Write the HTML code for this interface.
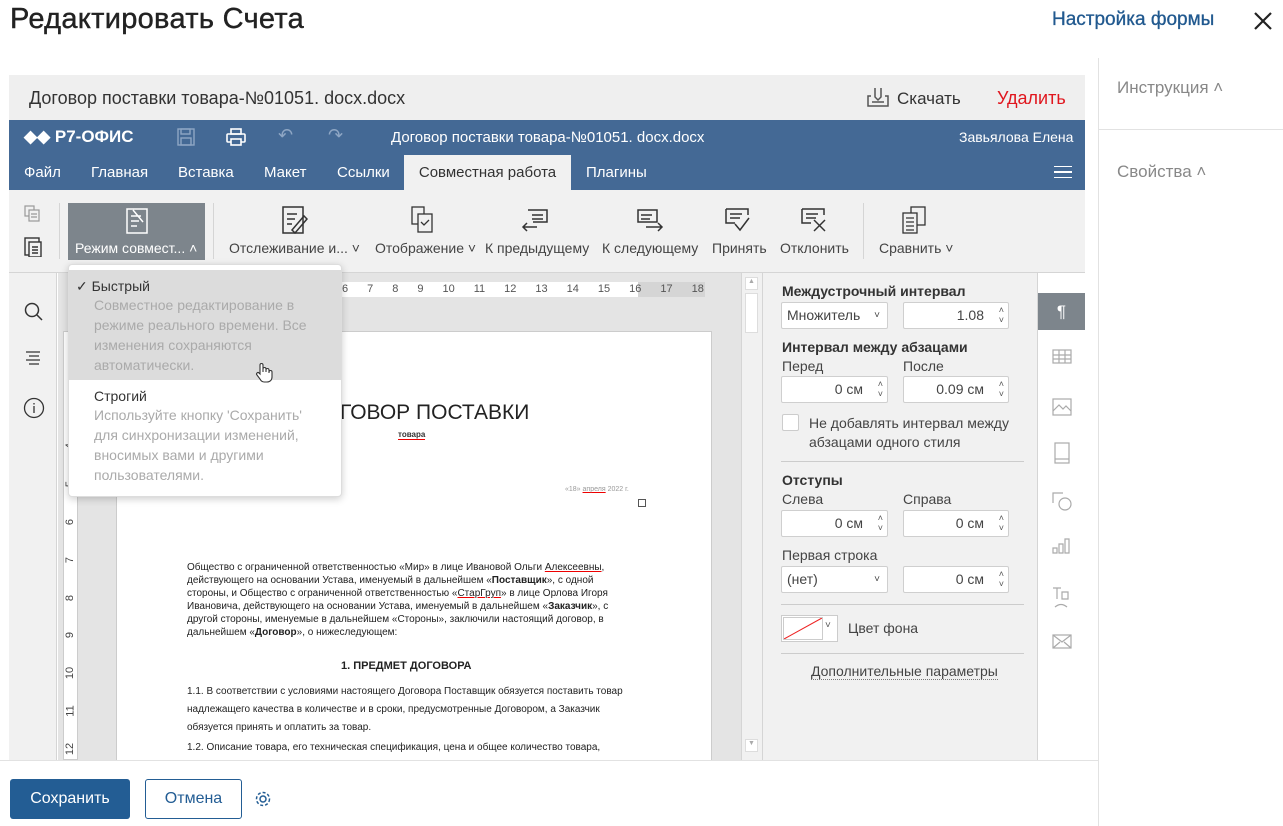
<!DOCTYPE html>
<html><head><meta charset="utf-8"><style>
*{box-sizing:border-box;margin:0;padding:0}
body{width:1283px;height:826px;overflow:hidden;background:#fff;font-family:"Liberation Sans",Arial,sans-serif;color:#333;position:relative}
.a{position:absolute;white-space:nowrap}
.tab{position:absolute;top:155px;height:35px;line-height:35px;color:#fff;font-size:15px}
.tb{position:absolute;font-size:14px;color:#444;text-align:center}
.lbl{position:absolute;font-size:14px;color:#444}
.inp{position:absolute;background:#fff;border:1px solid #cfcfcf;border-radius:2px;height:27px;font-size:14px;line-height:25px;color:#444}
.sp{position:absolute;right:4px;top:2px;font-size:9px;line-height:10px;color:#555;text-align:center}
.dt{font-size:10px;color:#222;line-height:13px}
</style></head><body>
<div class="a" style="left:10px;top:3px;font-size:29px;color:#222;letter-spacing:0.3px;-webkit-text-stroke:0.4px #222">Редактировать Счета</div>
<div class="a" style="left:1052px;top:9px;font-size:19px;color:#21598f;-webkit-text-stroke:0.3px #21598f">Настройка формы</div>
<svg class="a" style="left:1253px;top:11px" width="20" height="20"><path d="M2 2L18 18M18 2L2 18" stroke="#222" stroke-width="2.2"/></svg>
<div class="a" style="left:1098px;top:58px;width:1px;height:768px;background:#e2e2e2"></div>
<div class="a" style="left:1117px;top:78px;font-size:17px;color:#888">Инструкция ˄</div>
<div class="a" style="left:1099px;top:129px;width:184px;height:1px;background:#e2e2e2"></div>
<div class="a" style="left:1117px;top:162px;font-size:17px;color:#888">Свойства ˄</div>

<div class="a" style="left:9px;top:75px;width:1076px;height:45px;background:#efefef"></div>
<div class="a" style="left:29px;top:88px;font-size:18px;color:#333">Договор поставки товара-№01051. docx.docx</div>
<svg class="a" style="left:866px;top:86px" width="24" height="22" fill="none" stroke="#555" stroke-width="1.5"><path d="M9 2v9l3 3 3-3V2M5 10H2v10h20V10h-3M6 16h12"/></svg>
<div class="a" style="left:897px;top:89px;font-size:17px;color:#333">Скачать</div>
<div class="a" style="left:997px;top:88px;font-size:18px;color:#e0161e">Удалить</div>

<div class="a" style="left:9px;top:120px;width:1076px;height:70px;background:#446995"></div>
<div class="a" style="left:24px;top:127px;font-size:17px;font-weight:bold;color:#fff">◆◆ Р7-ОФИС</div>
<svg class="a" style="left:177px;top:128px" width="18" height="18" fill="none" stroke="#8ea6c4" stroke-width="1.4"><rect x="1" y="1" width="16" height="16"/><rect x="4" y="1" width="9" height="5"/><rect x="4" y="10" width="10" height="7"/></svg>
<svg class="a" style="left:226px;top:128px" width="20" height="18" fill="none" stroke="#fff" stroke-width="1.6"><rect x="5" y="1" width="10" height="5"/><rect x="1" y="6" width="18" height="8" rx="1"/><rect x="5" y="11" width="10" height="6" fill="#446995"/></svg>
<div class="a" style="left:278px;top:125px;font-size:18px;color:#8ea6c4">↶</div>
<div class="a" style="left:328px;top:125px;font-size:18px;color:#8ea6c4">↷</div>
<div class="a" style="left:391px;top:129px;font-size:15px;color:#fff">Договор поставки товара-№01051. docx.docx</div>
<div class="a" style="left:959px;top:129px;font-size:14px;color:#fff">Завьялова Елена</div>
<div class="tab" style="left:24px">Файл</div>
<div class="tab" style="left:91px">Главная</div>
<div class="tab" style="left:178px">Вставка</div>
<div class="tab" style="left:264px">Макет</div>
<div class="tab" style="left:337px">Ссылки</div>
<div class="tab" style="left:404px;width:167px;background:#f1f1f1;color:#333;text-align:center">Совместная работа</div>
<div class="tab" style="left:586px">Плагины</div>
<div class="a" style="left:1054px;top:166px;width:18px;height:12px;border-top:1.5px solid #fff;border-bottom:1.5px solid #fff"></div>
<div class="a" style="left:1054px;top:171px;width:18px;height:1.5px;background:#fff"></div>

<div class="a" style="left:9px;top:190px;width:1076px;height:83px;background:#f1f1f1;border-bottom:1px solid #d5d5d5"></div>
<svg class="a" style="left:24px;top:205px" width="20" height="52" fill="none" stroke="#999" stroke-width="1.2"><rect x="1" y="1" width="9" height="10"/><rect x="5" y="5" width="10" height="11" fill="#f1f1f1"/><path d="M7 9h6M7 12h6" /><g stroke="#333" stroke-width="1.4"><rect x="1" y="33" width="14" height="17"/><rect x="5" y="37" width="12" height="15" fill="#f1f1f1"/><path d="M8 42h6M8 45h6M8 48h6"/></g></svg>
<div class="a" style="left:59px;top:203px;width:1px;height:56px;background:#d5d5d5"></div>
<div class="a" style="left:68px;top:203px;width:137px;height:57px;background:#7d858c"></div>
<svg class="a" style="left:125px;top:207px" width="24" height="28" fill="none" stroke="#fff" stroke-width="1.5"><rect x="2" y="2" width="20" height="24"/><path d="M6 9h10M6 14h8M6 19h6M8 3l10 12"/></svg>
<div class="a" style="left:75px;top:240px;font-size:14px;color:#fff">Режим совмест... ˄</div>
<div class="a" style="left:213px;top:203px;width:1px;height:56px;background:#d5d5d5"></div>
<svg class="a" style="left:282px;top:206px" width="26" height="28" fill="none" stroke="#333" stroke-width="1.5"><rect x="1" y="1" width="20" height="26"/><path d="M5 8h10M5 13h8M5 18h5M10 24l12-14 3 3-12 14z"/></svg>
<div class="tb" style="left:229px;top:240px">Отслеживание и... ˅</div>
<svg class="a" style="left:410px;top:206px" width="26" height="28" fill="none" stroke="#333" stroke-width="1.3"><rect x="2" y="1" width="12" height="17"/><rect x="8" y="8" width="14" height="18" fill="#f1f1f1"/><path d="M11 16l3 3 5-5"/></svg>
<div class="tb" style="left:375px;top:240px">Отображение ˅</div>
<svg class="a" style="left:521px;top:207px" width="28" height="26" fill="none" stroke="#333" stroke-width="1.5"><path d="M7 3h19v12H12M11 8h11M11 12h11M2 20h14M6 16l-4 4 4 4"/></svg>
<div class="tb" style="left:485px;top:240px">К предыдущему</div>
<svg class="a" style="left:636px;top:207px" width="28" height="26" fill="none" stroke="#333" stroke-width="1.5"><path d="M2 3h19v12H2zM5 8h11M5 12h9M10 20h16M22 16l4 4-4 4"/></svg>
<div class="tb" style="left:602px;top:240px">К следующему</div>
<svg class="a" style="left:725px;top:207px" width="26" height="26" fill="none" stroke="#333" stroke-width="1.5"><path d="M1 2h22v6M1 2v14h9M5 7h12M5 11h10M10 17l5 6 9-12"/></svg>
<div class="tb" style="left:712px;top:240px">Принять</div>
<svg class="a" style="left:801px;top:207px" width="28" height="26" fill="none" stroke="#333" stroke-width="1.5"><path d="M1 2h22v6M1 2v14h9M5 7h12M5 11h10M13 13l11 11M24 13L13 24"/></svg>
<div class="tb" style="left:780px;top:240px">Отклонить</div>
<div class="a" style="left:863px;top:203px;width:1px;height:56px;background:#d5d5d5"></div>
<svg class="a" style="left:901px;top:206px" width="26" height="30" fill="none" stroke="#333" stroke-width="1.3"><rect x="10" y="1" width="14" height="18"/><rect x="2" y="7" width="14" height="20" fill="#f1f1f1"/><path d="M5 12h8M5 16h8M5 20h8M5 24h8"/></svg>
<div class="tb" style="left:879px;top:240px">Сравнить ˅</div>

<div class="a" style="left:9px;top:273px;width:48px;height:487px;background:#f1f1f1;border-right:1px solid #d5d5d5"></div>
<svg class="a" style="left:24px;top:302px" width="20" height="20" fill="none" stroke="#333" stroke-width="1.5"><circle cx="8" cy="8" r="6.5"/><path d="M13 13l5 5"/></svg>
<svg class="a" style="left:25px;top:350px" width="16" height="16" stroke="#333" stroke-width="1.2"><path d="M1 2h14M4 6h10M1 10h14M4 14h10"/></svg>
<svg class="a" style="left:23px;top:397px" width="22" height="22" fill="none" stroke="#333" stroke-width="1.3"><circle cx="11" cy="11" r="9.5"/><path d="M11 9v7M11 6v1.5"/></svg>

<div class="a" style="left:58px;top:273px;width:683px;height:487px;background:#e4e4e4"></div>
<div class="a" style="left:63px;top:331px;width:15px;height:429px;background:#fff;border:1px solid #ccc"></div>
<div class="a" style="left:64px;top:715px;width:13px;height:40px;font-size:11px;color:#444;line-height:13px"></div>
<div class="a" style="left:64px;top:440px;width:13px;height:315px;display:flex;flex-direction:column-reverse;justify-content:space-between;align-items:center;font-size:11px;color:#444">
<span style="transform:rotate(-90deg)">12</span><span style="transform:rotate(-90deg)">11</span><span style="transform:rotate(-90deg)">10</span><span style="transform:rotate(-90deg)">9</span><span style="transform:rotate(-90deg)">8</span><span style="transform:rotate(-90deg)">7</span><span style="transform:rotate(-90deg)">6</span><span style="transform:rotate(-90deg)">5</span><span style="transform:rotate(-90deg)">4</span></div>
<div class="a" style="left:340px;top:282px;width:365px;height:15px;background:#d5d5d5"></div>
<div class="a" style="left:340px;top:282px;width:298px;height:15px;background:#fff"></div>
<div class="a" style="left:342px;top:282px;width:362px;height:15px;display:flex;justify-content:space-between;font-size:11px;line-height:15px;color:#555"><span>6</span><span>7</span><span>8</span><span>9</span><span>10</span><span>11</span><span>12</span><span>13</span><span>14</span><span>15</span><span>16</span><span>17</span><span>18</span></div>
<div class="a" style="left:116px;top:331px;width:596px;height:430px;background:#fff;border:1px solid #ccc"></div>
<div class="a" style="left:340px;top:401px;font-size:21px;color:#222">ГОВОР ПОСТАВКИ</div>
<div class="a" style="left:398px;top:430px;font-size:8px;font-weight:bold;border-bottom:1px solid #e00">товара</div>
<div class="a" style="left:565px;top:486px;font-size:7px;color:#999">«18» <u style="text-decoration-color:#e00">апреля</u> 2022 г.</div>
<div class="a" style="left:638px;top:499px;width:8px;height:8px;border:1px solid #555"></div>
<div class="a dt" style="left:187px;top:561px">Общество с ограниченной ответственностью «Мир» в лице Ивановой Ольги <u style="text-decoration-color:#e00">Алексеевны</u>,<br>действующего на основании Устава, именуемый в дальнейшем «<b>Поставщик</b>», с одной<br>стороны, и Общество с ограниченной ответственностью «<u style="text-decoration-color:#e00">СтарГруп</u>» в лице Орлова Игоря<br>Ивановича, действующего на основании Устава, именуемый в дальнейшем «<b>Заказчик</b>», с<br>другой стороны, именуемые в дальнейшем «Стороны», заключили настоящий договор, в<br>дальнейшем «<b>Договор</b>», о нижеследующем:</div>
<div class="a" style="left:341px;top:660px;font-size:11px;font-weight:bold;color:#222">1. ПРЕДМЕТ ДОГОВОРА</div>
<div class="a dt" style="left:187px;top:683px;line-height:18px">1.1. В соответствии с условиями настоящего Договора Поставщик обязуется поставить товар<br>надлежащего качества в количестве и в сроки, предусмотренные Договором, а Заказчик<br>обязуется принять и оплатить за товар.</div>
<div class="a dt" style="left:187px;top:741px">1.2. Описание товара, его техническая спецификация, цена и общее количество товара,</div>
<div class="a" style="left:741px;top:273px;width:21px;height:487px;background:#f1f1f1;border-left:1px solid #d5d5d5"></div>
<div class="a" style="left:745px;top:277px;width:13px;height:13px;background:#fff;border:1px solid #ddd;font-size:7px;text-align:center;color:#aaa">▲</div>
<div class="a" style="left:745px;top:293px;width:13px;height:40px;background:#fff;border:1px solid #ddd"></div>
<div class="a" style="left:745px;top:739px;width:13px;height:13px;background:#fff;border:1px solid #ddd;font-size:7px;text-align:center;color:#aaa">▼</div>

<div class="a" style="left:762px;top:273px;width:276px;height:487px;background:#f1f1f1;border-left:1px solid #d5d5d5;border-right:1px solid #d5d5d5"></div>
<div class="lbl" style="left:782px;top:283px;font-weight:bold;color:#333">Междустрочный интервал</div>
<div class="inp" style="left:781px;top:302px;width:107px;padding-left:5px">Множитель<span style="position:absolute;right:7px;font-size:10px">˅</span></div>
<div class="inp" style="left:903px;top:302px;width:106px;text-align:right;padding-right:24px">1.08<div class="sp">˄<br>˅</div></div>
<div class="lbl" style="left:782px;top:339px;font-weight:bold;color:#333">Интервал между абзацами</div>
<div class="lbl" style="left:782px;top:358px">Перед</div>
<div class="lbl" style="left:903px;top:358px">После</div>
<div class="inp" style="left:781px;top:376px;width:107px;text-align:right;padding-right:24px">0 см<div class="sp">˄<br>˅</div></div>
<div class="inp" style="left:903px;top:376px;width:106px;text-align:right;padding-right:24px">0.09 см<div class="sp">˄<br>˅</div></div>
<div class="a" style="left:782px;top:414px;width:17px;height:17px;background:#fff;border:1px solid #ccc;border-radius:2px"></div>
<div class="lbl" style="left:809px;top:414px;line-height:19px">Не добавлять интервал между<br>абзацами одного стиля</div>
<div class="a" style="left:781px;top:461px;width:243px;height:1px;background:#ccc"></div>
<div class="lbl" style="left:782px;top:472px;font-weight:bold;color:#333">Отступы</div>
<div class="lbl" style="left:782px;top:491px">Слева</div>
<div class="lbl" style="left:903px;top:491px">Справа</div>
<div class="inp" style="left:781px;top:510px;width:107px;text-align:right;padding-right:24px">0 см<div class="sp">˄<br>˅</div></div>
<div class="inp" style="left:903px;top:510px;width:106px;text-align:right;padding-right:24px">0 см<div class="sp">˄<br>˅</div></div>
<div class="lbl" style="left:782px;top:547px">Первая строка</div>
<div class="inp" style="left:781px;top:566px;width:107px;padding-left:5px">(нет)<span style="position:absolute;right:7px;font-size:10px">˅</span></div>
<div class="inp" style="left:903px;top:566px;width:106px;text-align:right;padding-right:24px">0 см<div class="sp">˄<br>˅</div></div>
<div class="a" style="left:781px;top:604px;width:243px;height:1px;background:#ccc"></div>
<div class="a" style="left:781px;top:615px;width:57px;height:27px;background:#fff;border:1px solid #ccc"></div>
<svg class="a" style="left:783px;top:617px" width="40" height="23"><path d="M1 22L39 1" stroke="#e22" stroke-width="1"/><rect x=".5" y=".5" width="39" height="22" fill="none" stroke="#ccc"/></svg>
<div class="a" style="left:825px;top:620px;font-size:10px;color:#555">˅</div>
<div class="lbl" style="left:848px;top:620px">Цвет фона</div>
<div class="a" style="left:781px;top:653px;width:243px;height:1px;background:#ccc"></div>
<div class="lbl" style="left:811px;top:663px;border-bottom:1px dotted #777">Дополнительные параметры</div>
<div class="a" style="left:1038px;top:293px;width:47px;height:37px;background:#7d858c;color:#fff;font-size:17px;text-align:center;line-height:37px">¶</div>
<svg class="a" style="left:1050px;top:345px" width="76" height="320" fill="none" stroke="#aaa" stroke-width="1.2">
<rect x="3" y="5" width="18" height="13"/><path d="M3 10h18M3 14h18M9 5v13M15 5v13"/>
<rect x="3" y="54" width="18" height="16"/><path d="M3 66l6-6 4 4 3-3 5 5"/>
<rect x="5" y="98" width="14" height="20"/><path d="M5 114h14"/>
<path d="M13 148H3v10"/><circle cx="15" cy="159" r="6"/>
<path d="M3 208v-5h4v5zM9 208v-9h4v9zM15 208v-14h4v14z"/>
<path d="M3 243h8M7 243v11M12 247h6v7h-6zM5 262q6-5 12 0"/>
<rect x="3" y="290" width="18" height="13"/><path d="M3 290l9 7 9-7M3 303l7-6M21 303l-7-6"/>
</svg>

<div class="a" style="left:68px;top:264px;width:274px;height:233px;background:#fff;border:1px solid #ddd;border-radius:4px;box-shadow:0 2px 8px rgba(0,0,0,.2)"></div>
<div class="a" style="left:69px;top:270px;width:272px;height:110px;background:#dcdcdc"></div>
<div class="a" style="left:76px;top:276px;font-size:14px;color:#333;line-height:20px">✓ Быстрый</div>
<div class="a" style="left:94px;top:295px;font-size:14px;color:#aaa;line-height:20px">Совместное редактирование в<br>режиме реального времени. Все<br>изменения сохраняются<br>автоматически.</div>
<svg class="a" style="left:255px;top:362px" width="18" height="22" fill="#fff" stroke="#333" stroke-width="1.1"><path d="M5 12V3a1.5 1.5 0 013 0v7V7a1.5 1.5 0 013 0v3-2a1.5 1.5 0 013 0v3-1a1.5 1.5 0 013 0v5c0 3-2 5-5 5H9c-2 0-3-1-4-3l-3-4a1.4 1.4 0 012-2z"/></svg>
<div class="a" style="left:94px;top:386px;font-size:14px;color:#333;line-height:20px">Строгий</div>
<div class="a" style="left:94px;top:405px;font-size:14px;color:#aaa;line-height:20px">Используйте кнопку 'Сохранить'<br>для синхронизации изменений,<br>вносимых вами и другими<br>пользователями.</div>

<div class="a" style="left:0;top:760px;width:1098px;height:1px;background:#e2e2e2"></div>
<div class="a" style="left:10px;top:779px;width:120px;height:40px;background:#235d94;border-radius:3px;color:#fff;font-size:16px;text-align:center;line-height:40px">Сохранить</div>
<div class="a" style="left:145px;top:779px;width:97px;height:40px;border:1px solid #235d94;border-radius:3px;color:#235d94;font-size:16px;text-align:center;line-height:38px">Отмена</div>
<svg class="a" style="left:254px;top:790px" width="18" height="18" fill="none" stroke="#235d94" stroke-width="1.5"><circle cx="9" cy="9" r="3"/><circle cx="9" cy="9" r="6.5" stroke-dasharray="3 2"/></svg>
</body></html>
